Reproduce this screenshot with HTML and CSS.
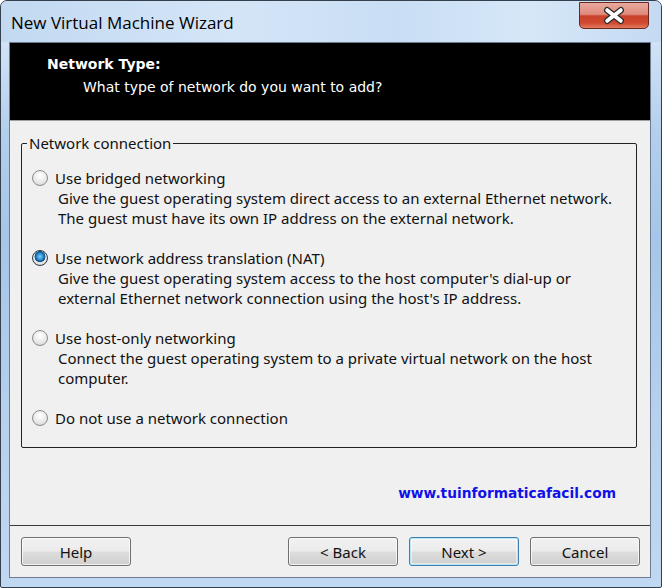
FILE: index.html
```html
<!DOCTYPE html>
<html>
<head>
<meta charset="utf-8">
<link rel="stylesheet" href="styles.css">
</head>
<body>
<div class="window">
  <div class="titlebar">
    <span class="title">New Virtual Machine Wizard</span>
    <div class="close">
      <svg width="70" height="27" viewBox="0 0 70 27">
        <path d="M28 8 L42 19 M42 8 L28 19" stroke="#2a2a2a" stroke-width="6.5" stroke-linecap="round" fill="none"/>
        <path d="M28 8 L42 19 M42 8 L28 19" stroke="#ffffff" stroke-width="4" stroke-linecap="round" fill="none"/>
      </svg>
    </div>
  </div>
  <div class="client">
    <div class="header">
      <div class="h-title">Network Type:</div>
      <div class="h-sub">What type of network do you want to add?</div>
    </div>
    <div class="body">
      <fieldset class="group">
        <legend>Network connection</legend>
        <div class="option">
          <div class="opt-row"><span class="radio"></span><span>Use bridged networking</span></div>
          <div class="desc">Give the guest operating system direct access to an external Ethernet network.<br>The guest must have its own IP address on the external network.</div>
        </div>
        <div class="option">
          <div class="opt-row"><span class="radio checked"></span><span>Use network address translation (NAT)</span></div>
          <div class="desc">Give the guest operating system access to the host computer's dial-up or<br>external Ethernet network connection using the host's IP address.</div>
        </div>
        <div class="option">
          <div class="opt-row"><span class="radio"></span><span>Use host-only networking</span></div>
          <div class="desc">Connect the guest operating system to a private virtual network on the host<br>computer.</div>
        </div>
        <div class="option">
          <div class="opt-row"><span class="radio"></span><span>Do not use a network connection</span></div>
        </div>
      </fieldset>
      <div class="link-row"><span class="link">www.tuinformaticafacil.com</span></div>
    </div>
    <div class="buttons">
      <button class="btn">Help</button>
      <div class="spacer"></div>
      <button class="btn">&lt; Back</button>
      <button class="btn focused">Next &gt;</button>
      <button class="btn">Cancel</button>
    </div>
  </div>
</div>
</body>
</html>
```
FILE: styles.css
```css
html, body {
  margin: 0;
  padding: 0;
  background: #ffffff;
}

.window {
  width: 662px;
  height: 588px;
  box-sizing: border-box;
  border: 1px solid #34404d;
  border-radius: 7px 7px 2px 2px;
  background: linear-gradient(to bottom, #c3d9f1 0%, #d3e4f6 6%, #b4cfec 22%, #a6c5e8 40%, #b6d0ed 70%, #c0d8f1 100%);
  display: flex;
  flex-direction: column;
  overflow: hidden;
  font-family: "Noto Sans", "Open Sans", sans-serif;
}

.titlebar {
  height: 41px;
  display: flex;
  align-items: flex-start;
  background: linear-gradient(to right, #c2d9f1 0%, #d4e5f7 35%, #c9def4 60%, #d6e7f8 80%, #c4daf2 100%);
}

.title {
  margin-left: 10px;
  margin-top: 11px;
  font-family: "Open Sans", "Noto Sans", sans-serif;
  font-size: 17px;
  line-height: 22px;
  color: #000;
}

.close {
  margin-left: auto;
  margin-right: 12px;
  margin-top: 1px;
  width: 70px;
  height: 27px;
  box-sizing: border-box;
  border: 1px solid #6b2a20;
  border-radius: 0 0 5px 5px;
  background: linear-gradient(to bottom, #e9a99e 0%, #df8a7c 45%, #c9412a 52%, #d0492f 80%, #e27a5e 100%);
  display: flex;
  align-items: center;
  justify-content: center;
}

.close svg {
  display: block;
}

.client {
  margin: 0 10px 0 8px;
  height: 536px;
  box-sizing: border-box;
  border: 1px solid #6b7c90;
  background: #f0f0f0;
  display: flex;
  flex-direction: column;
}

.header {
  height: 78px;
  box-sizing: border-box;
  background: #000;
  border-bottom: 1px solid #a0a0a0;
  padding: 12px 0 0 37px;
  color: #fff;
  font-family: "DejaVu Sans", sans-serif;
  font-size: 14px;
  line-height: 18px;
}

.h-title {
  font-weight: bold;
}

.h-sub {
  margin: 5px 0 0 36px;
}

.body {
  height: 404px;
  box-sizing: border-box;
  padding: 13px 13px 0 11px;
  display: flex;
  flex-direction: column;
  color: #111;
  font-size: 15px;
}

.group {
  margin: 0;
  padding: 16px 10px 19px 10px;
  border: 1px solid #222;
  border-radius: 2px;
}

.group legend {
  padding: 0 2px;
  margin-left: -5px;
  line-height: 18px;
  font-size: 15px;
}

.option + .option {
  margin-top: 20px;
}

.opt-row {
  display: flex;
  align-items: center;
  gap: 7px;
  line-height: 20px;
  height: 20px;
}

.radio {
  width: 16px;
  height: 16px;
  box-sizing: border-box;
  border-radius: 50%;
  border: 1px solid #8a8a8a;
  background: radial-gradient(circle at 50% 35%, #ffffff 0%, #eeeeee 45%, #d0d0d0 100%);
  flex: none;
}

.radio.checked {
  border-color: #2c3a46;
  background:
    radial-gradient(circle at 50% 40%, #7fd0ff 0%, #2e8fd4 28%, #0b4c82 48%, rgba(0,0,0,0) 52%),
    radial-gradient(circle at 50% 35%, #ffffff 0%, #e6e6e6 60%, #c8c8c8 100%);
}

.desc {
  padding-left: 26px;
  line-height: 20px;
}

.link-row {
  display: flex;
  justify-content: flex-end;
  margin-top: 36px;
  padding-right: 21px;
}

.link {
  font-family: "DejaVu Sans", sans-serif;
  font-weight: bold;
  font-size: 13.75px;
  line-height: 18px;
  color: #1010e8;
}

.buttons {
  border-top: 1px solid #3a3a3a;
  flex: 1;
  display: flex;
  align-items: flex-start;
  padding: 11px 10px 0 11px;
  gap: 11px;
}

.spacer {
  flex: 1;
}

.btn {
  width: 110px;
  height: 29px;
  box-sizing: border-box;
  border: 1px solid #707070;
  border-radius: 3px;
  background: linear-gradient(to bottom, #f2f2f2 0%, #ebebeb 48%, #dddddd 52%, #cfcfcf 100%);
  font-family: "Noto Sans", "Open Sans", sans-serif;
  font-size: 15px;
  color: #111;
  padding: 0;
  box-shadow: inset 0 0 0 1px rgba(255,255,255,0.7);
}

.btn.focused {
  border-color: #3c7fb1;
  box-shadow: inset 0 0 0 1px #b9e5f9, inset 0 0 0 2px rgba(255,255,255,0.5);
}
```
